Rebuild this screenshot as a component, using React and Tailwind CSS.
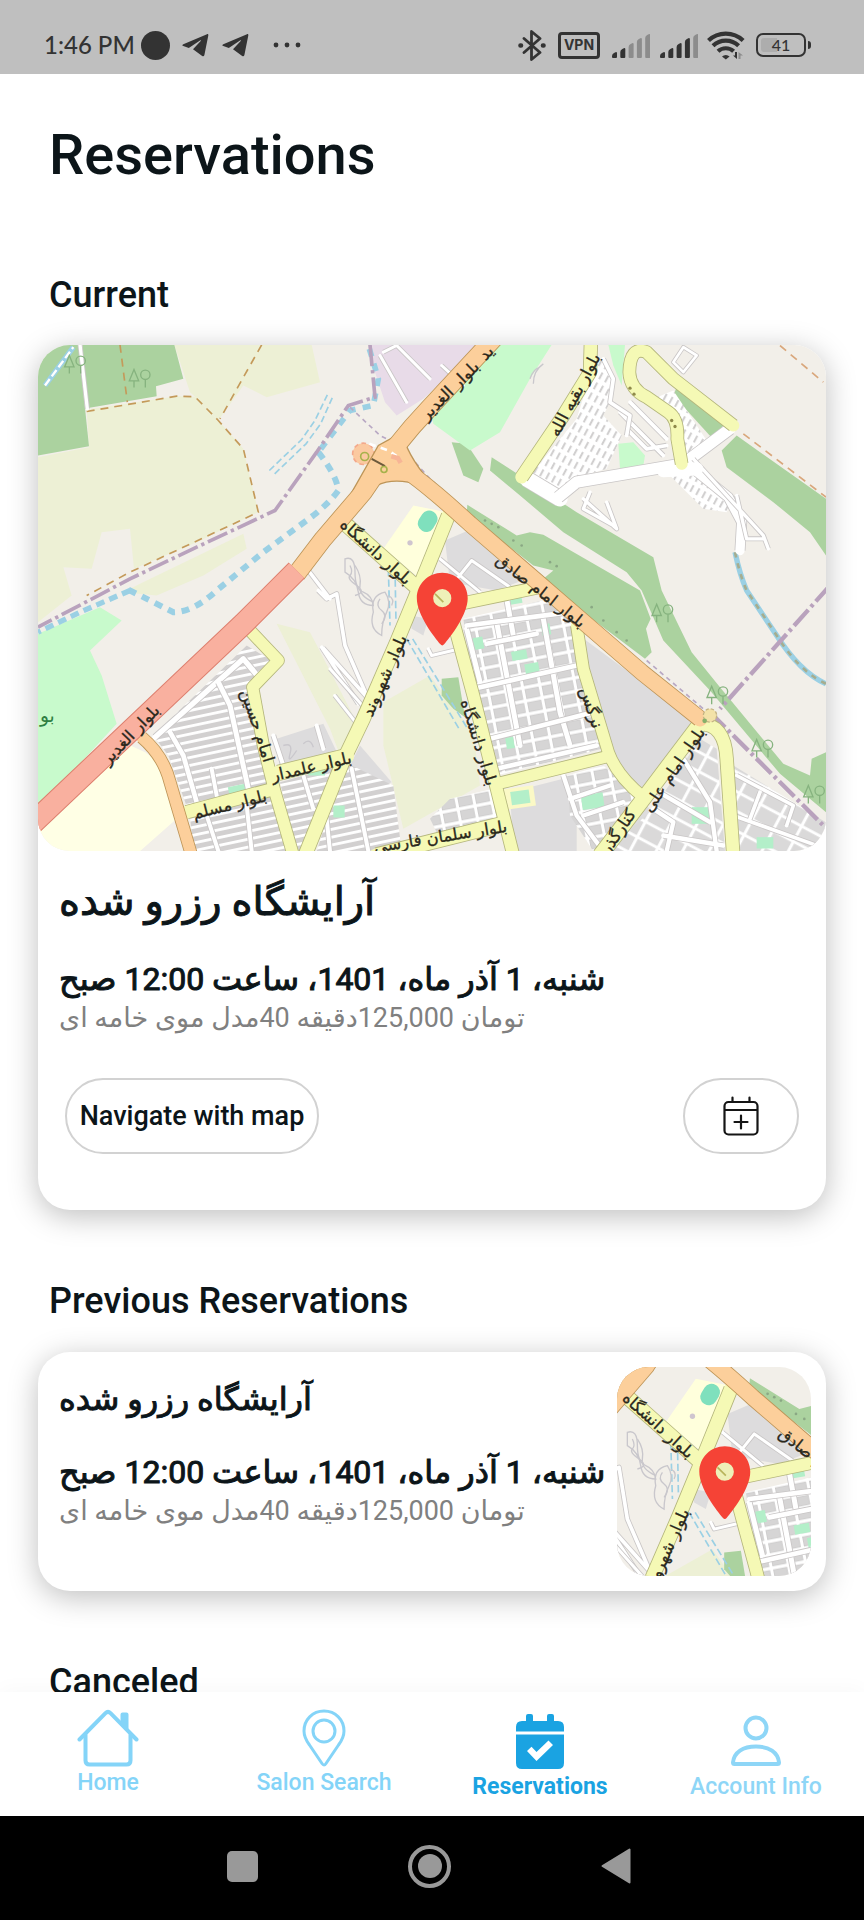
import React from "react";

/* ---------- map artwork ---------- */

const forest = [
  "24,28 145,28 177,332 24,360",
  "157,28 433,28 460,130 378,152 380,182 170,218",
  "1385,365 1640,530 1870,665 1895,765 1985,950 2070,1055 2260,1285 2340,1320 2345,1270 2388,1250 2388,1430 2250,1315 2040,1065 1900,915 1835,765 1790,710 1600,590 1470,480 1380,405",
  "1312,508 1460,600 1500,590 1540,598 1700,690 1830,765 1862,850 1848,880 1865,950 1845,970 1660,830 1540,730 1570,705 1510,690 1310,535",
  "2120,300 2388,490 2388,660 2340,590 2230,500 2090,395 2075,345",
  "1265,320 1310,325 1360,400 1345,440 1300,420",
  "1940,155 2080,270 2050,312 1930,180",
  "1235,1030 1285,1025 1305,1145 1270,1120 1235,1080",
];

const farmland = [
  "24,365 177,335 170,222 440,182 495,184 565,255 640,340 685,530 500,620 312,700 300,580 215,590 185,700 100,695 125,780 24,860",
  "433,28 845,28 870,140 710,185 640,150 565,255 495,184 480,170",
  "330,745 640,595 650,640 520,720 380,780 280,770",
  "740,865 840,890 980,1160 930,1260 900,1180",
  "1060,1100 1200,1020 1250,1090 1330,1190 1350,1350 1120,1480 1060,1230",
];

const parks = [
  "1380,28 1565,28 1500,130 1410,290 1320,345 1210,265 1200,215 1325,100",
  "24,895 210,815 275,855 180,945 215,1020 260,1165 24,1420",
  "1735,28 1785,28 1775,150 1750,90",
];

const residential = [
  { points: "370,1200 650,930 740,985 680,1060 735,1330 740,1360 480,1440 415,1260", fill: "url(#rows)" },
  { points: "480,1440 720,1375 780,1547 490,1547", fill: "url(#rows)" },
  { points: "750,1340 930,1290 840,1547 800,1547", fill: "url(#rows)" },
  { points: "945,1280 1090,1350 1115,1547 860,1547", fill: "url(#rows)" },
  { points: "1300,850 1560,790 1640,860 1650,1000 1715,1240 1400,1320 1330,1060", fill: "url(#blocks)" },
  { points: "1200,1450 1260,1390 1390,1360 1400,1450 1220,1490", fill: "url(#blocks)" },
  { points: "1610,1320 1720,1290 1830,1390 1690,1547 1620,1440", fill: "url(#blocks)" },
  { points: "1870,1420 2010,1210 2060,1240 2085,1547 1730,1547", fill: "url(#lanes)" },
  { points: "2110,1290 2388,1460 2388,1547 2115,1547", fill: "url(#lanes)" },
  { points: "1500,420 1640,250 1700,60 1745,110 1745,190 1720,240 1775,300 1730,400 1630,430 1590,500", fill: "url(#tight)" },
  { points: "1870,190 1930,165 2040,330 1980,390 1945,290", fill: "url(#tight)" },
  { points: "1910,410 1990,380 2110,490 2090,530 2020,520", fill: "url(#tight)" },
];

const plainGray = [
  "1655,905 2000,1160 1840,1370 1750,1270 1670,1000",
  "1440,1370 1600,1330 1640,1450 1640,1547 1450,1547",
  "1245,615 1350,570 1440,680 1490,730 1400,765 1260,740",
  "740,1210 880,1165 930,1270 750,1310",
  "1140,840 1195,850 1180,900 1145,880",
  "960,1290 990,1230 1085,1340 1060,1350",
  "1850,1410 1900,1470 1890,1547 1740,1547",
];

const whiteRoads = [
  { d: "M375 1205 L640 970 L690 1030", w: 16 },
  { d: "M565 1040 L600 1110 L655 1360", w: 15 },
  { d: "M420 1190 L460 1260 L500 1400", w: 14 },
  { d: "M545 1300 L560 1380 M530 1440 L565 1547 M650 1410 L665 1547", w: 12 },
  { d: "M730 1200 L760 1290 M860 1170 L880 1240 M820 1320 L850 1420 M965 1300 L1015 1547 M890 1450 L900 1547", w: 12 },
  { d: "M875 935 L985 1105 M880 938 L1015 1090 M865 765 L890 790 L920 775 L945 930 L1010 1080 M835 705 L900 790", w: 11 },
  { d: "M1400 860 L1470 1230 M1430 790 L1450 900 M1540 850 L1590 1130 L1620 1230 M1310 880 L1350 1040", w: 15 },
  { d: "M1310 870 L1620 830 M1370 925 L1520 895 M1330 1060 L1640 990 M1380 1210 L1690 1130 M1400 1300 L1700 1230", w: 14 },
  { d: "M1600 1320 L1640 1440 L1720 1547 M1620 1390 L1740 1350 M1660 1440 L1780 1400", w: 13 },
  { d: "M1870 1420 L1930 1460 L1910 1547 M1960 1270 L2040 1400 L2060 1547 M1870 1360 L2040 1460 M1900 1500 L2080 1530", w: 13 },
  { d: "M2110 1440 L2388 1540 M2120 1320 L2290 1410 L2270 1470 M2190 1370 L2160 1450", w: 11 },
  { d: "M1490 430 L1590 490", w: 46 },
  { d: "M1585 485 L1640 440 L1960 385 L2100 280", w: 34 },
  { d: "M1990 400 L2095 485 L2135 560 L2130 645", w: 28 },
  { d: "M1050 60 L1130 200 M1060 50 L1100 30 L1200 130 M1235 90 L1300 150", w: 9 },
  { d: "M1660 490 L1760 580 L1730 500 M1680 470 L1660 520 L1750 570 M1990 370 L2200 600 L2215 640 M2120 480 L2150 610 L2200 610", w: 10 },
  { d: "M1770 230 L1900 360 M1800 200 L1910 310 M1790 280 L1850 340 L1910 330", w: 11 },
  { d: "M1720 70 L1750 130 L1740 200 L1800 240 L1790 300", w: 11 },
  { d: "M1930 80 L1960 35 L2000 60 L1960 110 Z", w: 8 },
  { d: "M1230 670 L1350 770 M1285 725 L1325 675 L1440 755 M1195 940 L1205 960 L1290 940", w: 9 },
  { d: "M150 28 L172 220", w: 10 },
  { d: "M900 1000 L1015 1130 M914 1080 L1000 1190", w: 9 },
];

const yellowRoads = [
  { d: "M655 880 L745 975 L668 1055 L700 1230 L735 1370 L790 1560", w: 34 },
  { d: "M1255 540 L1160 775 L1100 920 L1000 1150 L940 1275 L825 1560", w: 40 },
  { d: "M745 1312 L950 1262", w: 44 },
  { d: "M470 1430 L725 1362", w: 38 },
  { d: "M1040 1560 L1420 1465", w: 44 },
  { d: "M940 560 L1165 760", w: 42 },
  { d: "M1265 840 L1330 1080 L1395 1340 L1450 1560", w: 36 },
  { d: "M1290 805 L1530 755", w: 36 },
  { d: "M1400 1345 L1725 1265", w: 34 },
  { d: "M1640 870 L1660 1000 L1735 1250 Q1760 1320 1840 1385", w: 34 },
  { d: "M2010 1165 L1840 1390 L1710 1560", w: 44 },
  { d: "M2010 1165 Q2085 1165 2090 1270 L2110 1560", w: 38 },
  { d: "M1683 10 L1680 110 L1600 240 L1475 425", w: 38 },
  { d: "M2110 270 L1930 130 L1850 50 Q1800 30 1798 110 Q1800 160 1850 185 L1915 230 Q1945 250 1942 310 L1955 385", w: 36 },
];

const orangeRoads = [
  { d: "M1400 0 L1200 215 Q1090 330 1000 470 L880 610 L800 715", w: 52 },
  { d: "M1075 375 Q1140 400 1320 565 L1500 720 L1650 850 L1835 1010 L2010 1150", w: 46 },
  { d: "M335 1205 Q400 1260 420 1340 L485 1560", w: 34 },
];

const labels = [
  { t: "بلوار الغدیر", x: 1262, y: 168, a: -45 },
  { t: "ید", x: 1372, y: 55, a: -45 },
  { t: "بلوار بقیه الله", x: 1638, y: 180, a: -62 },
  { t: "بلوار دانشگاه", x: 1035, y: 652, a: 42, inset: true },
  { t: "بلوار امام صادق", x: 1530, y: 770, a: 38, inset: true },
  { t: "بلوار شهروند", x: 1068, y: 1022, a: -66, inset: true },
  { t: "امام حسین", x: 678, y: 1172, a: 72 },
  { t: "بلوار علمدار", x: 845, y: 1298, a: -13 },
  { t: "بلوار مسلم", x: 600, y: 1412, a: -14 },
  { t: "بلوار الغدیر", x: 305, y: 1200, a: -46 },
  { t: "بلوار دانشگاه", x: 1342, y: 1222, a: 73 },
  { t: "نرگس", x: 1680, y: 1118, a: 72 },
  { t: "بلوار امام علی", x: 1935, y: 1305, a: -56 },
  { t: "کنارگذر", x: 1768, y: 1490, a: -56 },
  { t: "بلوار سلمان فارسی", x: 1232, y: 1508, a: -9 },
];

function Road({ d, w, fill, edge }) {
  return (
    <>
      <path d={d} fill="none" stroke={edge} strokeWidth={w + 5} strokeLinejoin="round" />
      <path d={d} fill="none" stroke={fill} strokeWidth={w} strokeLinejoin="round" strokeLinecap="round" />
    </>
  );
}

function Tree({ x, y }) {
  return (
    <g fill="none" stroke="#86b37f" strokeWidth="4">
      <path d={`M${x} ${y} l-14 34 h28 Z M${x} ${y + 34} v20`} />
      <circle cx={x + 34} cy={y + 16} r="14" />
      <path d={`M${x + 34} ${y + 30} v24`} />
    </g>
  );
}

function CityMap({ viewBox, className, label, inset = false }) {
  const shown = inset ? labels.filter((l) => l.inset) : labels;
  return (
    <svg viewBox={viewBox} preserveAspectRatio="xMidYMid slice" className={className} role="img" aria-label={label}>
      <defs>
        <pattern id="rows" width="90" height="23" patternUnits="userSpaceOnUse" patternTransform="rotate(-12)">
          <rect width="90" height="23" fill="#d2d0d0" />
          <path d="M0 4 H90" stroke="#fff" strokeWidth="9" />
        </pattern>
        <pattern id="blocks" width="52" height="40" patternUnits="userSpaceOnUse" patternTransform="rotate(-11)">
          <rect width="52" height="40" fill="#fff" />
          <rect x="7" y="6" width="40" height="28" fill="#d6d5d5" stroke="#c4c3c3" strokeWidth="2" />
        </pattern>
        <pattern id="lanes" width="70" height="52" patternUnits="userSpaceOnUse" patternTransform="rotate(28)">
          <rect width="70" height="52" fill="#dad9d9" />
          <path d="M0 5 H70 M5 0 V52" stroke="#fff" strokeWidth="9" />
        </pattern>
        <pattern id="tight" width="34" height="20" patternUnits="userSpaceOnUse" patternTransform="rotate(-62)">
          <rect width="34" height="20" fill="#fff" />
          <rect x="6" y="6" width="22" height="6" fill="#cfcdcd" />
        </pattern>
      </defs>

      <rect x="0" y="0" width="2420" height="1580" fill="#f2efe9" />
      {farmland.map((p) => <polygon key={p} points={p} fill="#edf0d5" />)}
      {forest.map((p) => <polygon key={p} points={p} fill="#abd29f" />)}
      {parks.map((p) => <polygon key={p} points={p} fill="#c8facc" />)}
      <polygon points="1020,28 1400,28 1310,70 1180,190 1100,240 1065,200 1035,110" fill="#e8dbe8" />
      <polygon points="290,1225 345,1250 400,1290 440,1450 330,1547 24,1547 24,1480" fill="#ffffe5" />
      <polygon points="1150,510 1250,530 1165,725 1060,640" fill="#ffffdc" />
      {plainGray.map((p) => <polygon key={p} points={p} fill="#dddcdd" />)}
      {residential.map((r) => <polygon key={r.points} points={r.points} fill={r.fill} />)}
      <polygon points="1765,325 1810,320 1845,360 1840,390 1770,400" fill="#c8facc" />

      <g fill="#b3efc9">
        <rect x="1330" y="905" width="30" height="36" transform="rotate(-10 1345 923)" />
        <rect x="1445" y="945" width="46" height="28" transform="rotate(-10 1468 959)" />
        <rect x="1485" y="983" width="42" height="30" transform="rotate(-10 1506 998)" />
        <rect x="1535" y="865" width="26" height="34" transform="rotate(-10 1548 882)" />
        <rect x="1428" y="1205" width="24" height="34" transform="rotate(-10 1440 1222)" />
        <rect x="1440" y="785" width="36" height="20" transform="rotate(-10 1458 795)" />
        <rect x="1655" y="1375" width="66" height="44" transform="rotate(-8 1688 1397)" />
        <rect x="1985" y="1415" width="55" height="50" />
        <rect x="2180" y="1505" width="50" height="34" />
        <rect x="595" y="1350" width="55" height="22" transform="rotate(-12 620 1360)" />
        <rect x="910" y="1410" width="34" height="36" />
        <rect x="835" y="1300" width="50" height="20" />
      </g>
      <rect x="1422" y="1355" width="92" height="62" fill="#fbf9c6" transform="rotate(-8 1468 1386)" />
      <rect x="1443" y="1366" width="56" height="40" fill="#b3efc9" transform="rotate(-8 1468 1386)" />
      <rect x="1168" y="524" width="50" height="66" rx="24" fill="#7fe0bd" transform="rotate(32 1193 557)" />
      <circle cx="1140" cy="622" r="8" fill="#cfc5cf" />

      {/* water courses */}
      <g fill="none" stroke="#9bd0e4">
        <path d="M865 350 Q920 420 925 465 Q900 500 850 540 L700 650 L560 765 Q490 830 430 830 Q370 800 290 760" strokeWidth="18" strokeDasharray="24 20" />
        <path d="M300 765 L150 830 L24 890" strokeWidth="16" strokeDasharray="26 16" />
        <path d="M1018 40 L1045 130 L1030 210 L960 225 L865 350" strokeWidth="17" strokeDasharray="24 22" />
        <path d="M718 405 L815 312 L855 255 L892 178 M734 415 L828 325 L872 265 L908 184" strokeWidth="5" strokeDasharray="20 10" />
        <path d="M1075 700 L1080 870 M1095 700 L1098 860 M1130 910 L1290 1185 M1148 910 L1310 1175" strokeWidth="5" strokeDasharray="22 10" />
        <path d="M45 150 L130 35" strokeWidth="16" />
        <path d="M2115 650 Q2130 720 2150 765 L2240 900 Q2310 1010 2388 1045" strokeWidth="16" />
      </g>
      <path d="M45 150 L130 35" fill="none" stroke="#fff" strokeWidth="7" strokeDasharray="24 10" />
      <path d="M2115 650 Q2130 720 2150 765 L2240 900 Q2310 1010 2388 1045" fill="none" stroke="#a6ad8f" strokeWidth="8" strokeDasharray="16 18" />

      {/* tracks and footpaths */}
      <g fill="none" stroke="#c49a5a" strokeWidth="5" strokeDasharray="24 18">
        <path d="M170 228 L440 182 L495 184 L565 255 L640 340 L685 530 L300 710 L170 780" />
        <path d="M270 28 L292 200 M695 28 L570 250" />
        <path d="M2250 30 L2380 140 M2140 295 L2388 485" stroke="#d9a77c" />
      </g>
      <g fill="none" stroke="#b9a9c4" strokeWidth="5" strokeDasharray="14 12">
        <path d="M960 215 L1050 300 L1110 330 L1200 430 L1310 530 M1850 975 L2020 1120" />
      </g>

      {/* district border */}
      <g fill="none" stroke="#b9a2bd" strokeWidth="13" strokeDasharray="64 12 10 12">
        <path d="M1020 28 L1035 185 L955 210 L860 350 L735 525 L500 635 L300 730 L24 875" strokeWidth="11" />
        <path d="M2400 750 L2070 1120 M2040 1130 L2400 1490" />
      </g>

      <g fill="none" stroke="#c9c7cc" strokeWidth="4">
        <path d="M945 670 q30 -10 30 40 t25 60 t30 40 q-40 0 -45 -40 t-40 -60 Z" />
        <path d="M960 690 q10 20 0 30 t20 30 t-5 30 M975 690 q20 30 15 60 t40 50 M1030 830 q-10 -50 35 -60 q20 30 5 60 t-15 70 q-40 -20 -25 -70 Z" />
        <path d="M1050 790 q-15 20 5 35 t0 40 M1075 780 q20 10 10 30" />
        <path d="M1500 130 q10 -30 30 -35 M1510 145 q0 -40 30 -60" />
        <path d="M760 1230 q30 -10 20 25 t20 -10 M820 1225 q20 -20 30 10" />
      </g>

      {whiteRoads.map((r) => <Road key={r.d} d={r.d} w={r.w} fill="#ffffff" edge="#c9c6c6" />)}
      <path d="M1900 405 L2000 400" stroke="#fff" strokeWidth="40" strokeLinecap="round" />
      {yellowRoads.map((r) => (
        <path key={r.d} d={r.d} fill="none" stroke="#b4b67c" strokeWidth={r.w + 5} strokeLinejoin="round" />
      ))}
      {yellowRoads.map((r) => (
        <path key={r.d} d={r.d} fill="none" stroke="#f5f9b5" strokeWidth={r.w} strokeLinejoin="round" strokeLinecap="round" />
      ))}

      <circle cx="1000" cy="355" r="32" fill="#fbc9a0" stroke="#f3a98c" strokeWidth="5" strokeDasharray="14 10" />
      {orangeRoads.map((r) => (
        <path key={r.d} d={r.d} fill="none" stroke="#bd9558" strokeWidth={r.w + 5} strokeLinejoin="round" />
      ))}
      <path d="M1118 290 Q1125 350 1200 440 L1170 450 Q1060 410 985 490 L960 480 L1045 330 Z" fill="#fccf9b" stroke="#bd9558" strokeWidth="4" />
      {orangeRoads.map((r) => (
        <path key={r.d} d={r.d} fill="none" stroke="#fccf9b" strokeWidth={r.w} strokeLinejoin="round" strokeLinecap="round" />
      ))}
      <path d="M1018 325 L1075 345 L1100 362" fill="none" stroke="#fff" strokeWidth="8" strokeDasharray="20 16" />
      <path d="M1025 370 L1065 392" stroke="#6d5a3c" strokeWidth="6" />
      <g fill="none" stroke="#a7b24c" strokeWidth="5">
        <circle cx="1004" cy="363" r="12" />
        <circle cx="1062" cy="402" r="9" />
      </g>
      <path d="M1084 362 l20 6 l8 14" fill="none" stroke="#f7b596" strokeWidth="14" />

      <path d="M800 705 L640 865 L360 1130 L10 1462" fill="none" stroke="#dd7f6e" strokeWidth="68" />
      <path d="M800 705 L640 865 L360 1130 L10 1462" fill="none" stroke="#f9b09f" strokeWidth="62" />
      <circle cx="2040" cy="1140" r="20" fill="#f3e2a8" stroke="#c4b484" strokeWidth="4" strokeDasharray="10 6" />
      <circle cx="2024" cy="1156" r="7" fill="#86b06a" />

      <Tree x={312} y={102} />
      <Tree x={118} y={60} />
      <Tree x={1880} y={806} />
      <Tree x={2045} y={1052} />
      <Tree x={2180} y={1212} />
      <Tree x={2335} y={1350} />
      <g fill="#8aa884">
        <circle cx="1365" cy="555" r="4" /><circle cx="1385" cy="565" r="4" /><circle cx="1405" cy="575" r="4" />
        <circle cx="1450" cy="615" r="4" /><circle cx="1475" cy="630" r="4" /><circle cx="1560" cy="680" r="4" />
        <circle cx="1580" cy="692" r="4" /><circle cx="1685" cy="815" r="4" /><circle cx="1720" cy="855" r="4" />
        <circle cx="1760" cy="890" r="4" /><circle cx="1790" cy="915" r="4" />
      </g>
      <g fill="#8f8a4a">
        <circle cx="1800" cy="158" r="5" /><circle cx="1812" cy="176" r="5" />
        <circle cx="1925" cy="255" r="5" /><circle cx="1935" cy="273" r="5" />
      </g>

      <g fontFamily='"DejaVu Sans", sans-serif' fontSize="49" textAnchor="middle" fill="#2a281c" stroke="#2a281c" strokeWidth="1">
        {shown.map((l) => (
          <text key={`${l.x}-${l.y}`} x={l.x} y={l.y} dy="12" transform={`rotate(${l.a} ${l.x} ${l.y})`}>{l.t}</text>
        ))}
      </g>
      {!inset && (
        <text x="52" y="1160" fontFamily='"DejaVu Sans", sans-serif' fontSize="56" textAnchor="middle" fill="#2f7f42">بو</text>
      )}

      <circle cx="1237" cy="788" r="34" fill="#eef0b8" />
      <path d="M1215 775 L1240 800" stroke="#b8b45c" strokeWidth="5" />
      <g transform="translate(1106 690) scale(10.9)">
        <path
          fill="#f54336"
          fillRule="evenodd"
          d="M12 2C8.13 2 5 5.13 5 9c0 4.6 4.9 10.8 6.5 12.7.3.4.7.4 1 0C14.1 19.8 19 13.6 19 9c0-3.87-3.13-7-7-7zm0 9.5a2.5 2.5 0 1 1 0-5 2.5 2.5 0 0 1 0 5z"
        />
      </g>
    </svg>
  );
}

/* ---------- status bar ---------- */

function TelegramIcon() {
  return (
    <svg viewBox="0 0 27 24" className="h-6 w-[27px]" fill="#333" aria-hidden="true">
      <path d="M25 1.2 1.3 11.2c-1.2.5-1.2 1.5 0 1.9l5.5 1.9L18 7.5c.7-.4 1.2.1.7.6L11 16.2l9.2 6.8c1 .6 1.9.3 2.2-.9L26.3 2.6c.3-1.2-.4-1.8-1.3-1.4z" />
    </svg>
  );
}

function SignalIcon({ level }) {
  const heights = [6, 10, 15, 20, 24];
  return (
    <svg viewBox="0 0 38 25" className="h-[25px] w-[38px]" aria-hidden="true">
      {heights.map((h, i) => (
        <path
          key={h}
          d={`M${i * 8.3} ${25 - h + 4} q0 -2 2 -3 l2 -1 q1 0 1 1 V24 q0 1 -1 1 h-3 q-1 0 -1 -1 Z`}
          fill={i < level ? "#333" : "#8c8c8c"}
        />
      ))}
    </svg>
  );
}

function StatusBar() {
  return (
    <header className="flex h-[74px] shrink-0 items-center justify-between bg-[#bfbfbf] pt-4 pr-[53px] pl-11 text-[#333]">
      <div className="flex items-center">
        <span className="w-[97px] font-[Lato,sans-serif] text-[24px] leading-8 font-medium whitespace-nowrap">1:46 PM</span>
        <span className="size-[29px] rounded-full bg-[#333]" />
        <span className="ml-3 flex gap-[13px]">
          <TelegramIcon />
          <TelegramIcon />
        </span>
        <svg viewBox="0 0 28 6" className="ml-6 h-[6px] w-7" fill="#333" aria-hidden="true">
          <circle cx="3" cy="3" r="2.4" />
          <circle cx="14" cy="3" r="2.4" />
          <circle cx="25" cy="3" r="2.4" />
        </svg>
      </div>
      <div className="flex items-center">
        <svg viewBox="0 0 28 31" className="h-[31px] w-7" fill="none" stroke="#333" strokeWidth="2.8" strokeLinejoin="round" strokeLinecap="round" aria-hidden="true">
          <path d="M6 8.5 22 22.5 13.5 29.5V1.5L22 8.5 6 22.5" />
          <path d="M2.5 15.5h.5M25 15.5h.5" strokeWidth="4.6" />
        </svg>
        <span className="ml-3 flex h-[27px] w-[42px] items-center justify-center rounded-[4px] border-3 border-[#333] font-[Inter,sans-serif] text-[14px] leading-none font-bold">VPN</span>
        <span className="ml-3 flex gap-[10px]">
          <SignalIcon level={2} />
          <SignalIcon level={4} />
        </span>
        <svg viewBox="0 0 38 29" className="ml-[9px] h-[29px] w-[38px]" aria-hidden="true">
          <g fill="none" stroke="#333" strokeWidth="4.2">
            <path d="M1.5 9.5a25 25 0 0 1 34.6 0M6 14.8a18.5 18.5 0 0 1 25.6 0M11 20.3a11.500 11.500 0 0 1 15.600 0" />
          </g>
          <path d="M15 25.500a5.500 5.500 0 0 1 7.600 0l-3.800 3z" fill="#333" />
          <path d="M30 21v7l-4-3.500h2V21z" fill="#333" />
          <path d="M31.500 28v-7l4.500 3.500h-2.500V28z" fill="#8c8c8c" />
        </svg>
        <span className="ml-[11px] flex h-6 w-[50px] items-center rounded-[7px] border-2 border-[#333] p-[3px]">
          <span className="flex h-full w-full items-center justify-center rounded-[3px] bg-linear-to-r from-[#adadad] from-40% to-transparent to-40% font-[Lato,sans-serif] text-[16px] leading-none font-medium">41</span>
        </span>
        <span className="ml-[2px] h-2 w-[3px] rounded-r-sm bg-[#333]" />
      </div>
    </header>
  );
}

/* ---------- content ---------- */

function Section({ title, children }) {
  return (
    <section>
      <h2 className="pl-[11px] text-[36px] leading-[42px] font-medium">{title}</h2>
      {children}
    </section>
  );
}

function BookingText({ titleClass }) {
  return (
    <div dir="rtl" className="text-left whitespace-nowrap">
      <h3 className={titleClass}>آرایشگاه رزرو شده</h3>
      <p className="text-[32px] leading-[42px] [-webkit-text-stroke:1px_#0c1519]">شنبه، 1 آذر ماه، 1401، ساعت 12:00 صبح</p>
      <p className="text-[27px] leading-9 text-[#808080]">تومان 125,000دقیقه 40مدل موی خامه ای</p>
    </div>
  );
}

function CalendarPlus() {
  return (
    <svg viewBox="0 0 36 40" className="h-10 w-9" fill="none" stroke="#151515" strokeWidth="2.2" strokeLinecap="round" aria-hidden="true">
      <rect x="1.5" y="6" width="33" height="32.5" rx="4" />
      <path d="M2 14h32M9.5 1.5V6M26.5 1.5V6M18 19.5v13M11.5 26h13" />
    </svg>
  );
}

/* ---------- bottom tabs ---------- */

const tabs = [
  {
    label: "Home",
    tone: "font-medium text-[#84d4f8]",
    icon: (
      <svg viewBox="0 0 62 58" className="h-[58px] w-[62px]" fill="none" stroke="currentColor" strokeWidth="4" strokeLinecap="round" strokeLinejoin="round" aria-hidden="true">
        <path d="M2.5 30.5 28.5 4.2q2.5-2.5 5 0L59.5 30.5" />
        <path d="M8.5 26v25.5q0 4 4 4h37q4 0 4-4V26" />
        <path d="M45.5 5.5v9l4 4.5V5.5z" fill="currentColor" />
      </svg>
    ),
  },
  {
    label: "Salon Search",
    tone: "font-medium text-[#84d4f8]",
    icon: (
      <svg viewBox="0 0 44 58" className="h-[58px] w-11" fill="none" stroke="currentColor" strokeWidth="3" strokeLinejoin="round" aria-hidden="true">
        <path d="M22 2C10.5 2 2 11 2 22c0 6 2.5 10 5.5 14L20 54.5q2 3 4 0L36.5 36c3-4 5.5-8 5.5-14C42 11 33.5 2 22 2z" />
        <circle cx="22" cy="22" r="11" />
      </svg>
    ),
  },
  {
    label: "Reservations",
    tone: "pt-1 font-bold text-[#1aa3e2]",
    current: true,
    icon: (
      <svg viewBox="0 0 50 58" className="h-[58px] w-[50px]" fill="currentColor" aria-hidden="true">
        <path d="M1 18.5V14q0-6 6-6h4V3q0-2 2-2h3q2 0 2 2v5h14V3q0-2 2-2h3q2 0 2 2v5h4q6 0 6 6v4.5H1z" />
        <path fillRule="evenodd" d="M1 21.5h48V50q0 6-6 6H7q-6 0-6-6zM12 38l9.5 10L38 32l-4.5-4.5L21.5 39 16.5 33.8z" />
      </svg>
    ),
  },
  {
    label: "Account Info",
    tone: "pt-1 font-medium text-[#8ed6f7]",
    icon: (
      <svg viewBox="0 0 50 58" className="h-[58px] w-[50px]" fill="none" stroke="currentColor" strokeWidth="4" strokeLinejoin="round" aria-hidden="true">
        <circle cx="25" cy="15" r="10.5" />
        <path d="M2 49.5C3 39 12 33.5 25 33.5S47 39 48 49.5q0 1.5-1.5 1.5h-43Q2 51 2 49.5z" />
      </svg>
    ),
  },
];

export default function App() {
  return (
    <div className="flex h-screen flex-col bg-white font-[Roboto,'DejaVu_Sans',sans-serif] text-[#0c1519]">
      <StatusBar />

      <main className="flex min-h-0 flex-1 flex-col overflow-y-auto px-[38px] pt-[49px] [scrollbar-width:none]">
        <h1 className="pl-[11px] text-[56px] leading-[64px] font-medium">Reservations</h1>

        <div className="mt-[87px] flex flex-col gap-[70px]">
          <Section title="Current">
            <article className="mt-[29px] rounded-[32px] bg-white pb-14 shadow-[0_6px_30px_rgba(0,0,0,0.26)]">
              <CityMap viewBox="24 28 2364 1519" className="aspect-[788/506] w-full rounded-[32px]" label="Salon location" />
              <div className="px-[21px] pt-[23px]">
                <BookingText titleClass="mb-7 text-[40px] leading-[56px] [-webkit-text-stroke:1px_#0c1519]" />
              </div>
              <div className="mt-[42px] flex justify-between px-[27px]">
                <button type="button" className="h-[76px] w-[254px] rounded-[38px] border-2 border-[#d2d2d2] text-[27px] leading-8 font-medium whitespace-nowrap">
                  Navigate with map
                </button>
                <button type="button" aria-label="Add to calendar" className="flex h-[76px] w-[116px] items-center justify-center rounded-[38px] border-2 border-[#d2d2d2]">
                  <CalendarPlus />
                </button>
              </div>
            </article>
          </Section>

          <Section title="Previous Reservations">
            <article className="mt-[30px] flex justify-between rounded-[32px] bg-white py-[15px] pr-[15px] pl-[21px] shadow-[0_6px_30px_rgba(0,0,0,0.26)]">
              <div className="pt-2">
                <BookingText titleClass="mb-7 text-[32px] leading-[48px] [-webkit-text-stroke:1px_#0c1519]" />
              </div>
              <CityMap inset viewBox="914 474 581 627" className="h-[209px] w-[194px] shrink-0 rounded-[32px]" label="Salon location" />
            </article>
          </Section>

          <Section title="Canceled" />
        </div>
      </main>

      <nav className="grid h-[124px] shrink-0 grid-cols-4 bg-white pt-[17px] shadow-[0_-2px_20px_rgba(0,0,0,0.03)]" aria-label="Main">
        {tabs.map((tab) => (
          <a
            key={tab.label}
            href="#"
            aria-current={tab.current ? "page" : undefined}
            className={`flex flex-col items-center text-[23px] leading-8 ${tab.tone}`}
          >
            {tab.icon}
            {tab.label}
          </a>
        ))}
      </nav>

      <footer className="flex h-[104px] shrink-0 items-center justify-center gap-[150px] bg-black pr-[6px] pb-1">
        <button type="button" aria-label="Recent apps" className="size-[31px] rounded-[5px] bg-[#999]" />
        <button type="button" aria-label="Home screen" className="flex size-[43px] items-center justify-center rounded-full border-4 border-[#999]">
          <span className="size-6 rounded-full bg-[#999]" />
        </button>
        <button type="button" aria-label="Back">
          <svg viewBox="0 0 30 36" className="h-9 w-[30px]" fill="#999" stroke="#999" strokeWidth="2" strokeLinejoin="round" aria-hidden="true">
            <path d="M1.5 18 28.5 1.5v33z" />
          </svg>
        </button>
      </footer>
    </div>
  );
}
